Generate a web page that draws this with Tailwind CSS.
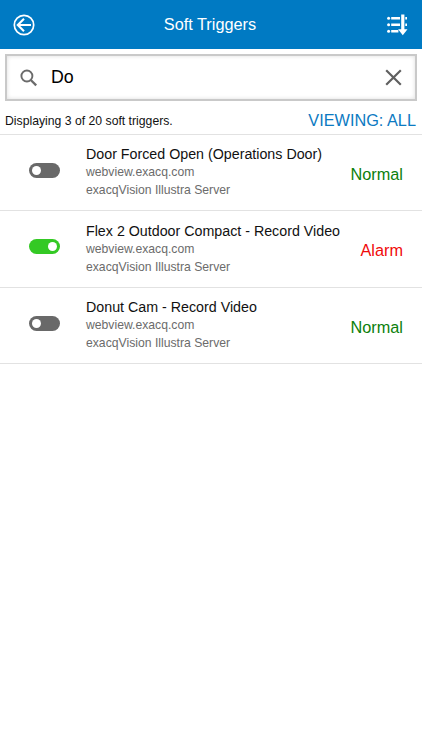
<!DOCTYPE html>
<html lang="en">
<head>
<meta charset="utf-8">
<title>Soft Triggers</title>
<script src="https://cdn.jsdelivr.net/npm/@tailwindcss/browser@4"></script>
</head>
<body class="h-[750px] overflow-hidden bg-white font-['Liberation_Sans',Arial,sans-serif] text-[#111]">
<header class="flex h-[49px] items-center justify-between bg-[#007ac3] pl-[13px] pr-[14px] text-white">
  <svg class="size-[22px]" viewBox="0 0 22 22" fill="none" stroke="currentColor" stroke-width="1.7"><circle cx="11" cy="11" r="9.7"/><path d="M18 11H4.8M11 4.8 4.8 11l6.2 6.2" stroke-width="2.1"/></svg>
  <h1 class="mr-[2px] pb-[2px] text-[16.3px] leading-5">Soft Triggers</h1>
  <svg class="h-[22px] w-[21px]" viewBox="0 0 21 22" fill="currentColor"><circle cx="1.6" cy="4.2" r="1.5"/><circle cx="1.6" cy="10.8" r="1.5"/><circle cx="1.6" cy="17.2" r="1.5"/><path d="M4.2 3H13v2.4H4.2zM18.3 3H20v2.4h-1.7zM4.2 9.6H13V12H4.2zM18.3 9.6H20V12h-1.7zM4.2 16h7.2v2.4H4.2z"/><path d="M14.2 0.5h3.2v14.8h3.1L15.8 21.3l-4.7-6h3.1z"/></svg>
</header>
<main>
  <div class="mx-[5px] mt-[5px] flex h-[47px] items-center border-2 border-[#c9c9c9] pr-[13px] pl-[13px] shadow-[inset_0_0_4px_#ddd]">
    <svg class="h-[18px] w-[17px]" viewBox="0 0 17 18" fill="none" stroke="#6b6b6b" stroke-width="1.9"><circle cx="6.9" cy="7" r="5.5"/><path d="m10.8 11 5.4 5.4" stroke-width="2.3"/></svg>
    <span class="ml-[14px] flex-1 pb-[2px] text-[17.8px] leading-5 text-black">Do</span>
    <svg class="size-[17px]" viewBox="0 0 17 17" fill="none" stroke="#606060" stroke-width="2.2"><path d="m1.2 1.2 14.6 14.6M15.8 1.2 1.2 15.8"/></svg>
  </div>
  <div class="flex h-[34px] items-start justify-between border-b border-[#e2e2e2] pr-[6px] pl-[5px]">
    <p class="pt-[13px] text-[12.22px] leading-[15px]">Displaying 3 of 20 soft triggers.</p>
    <p class="pt-[9px] text-[16.3px] leading-5 text-[#0c7ac2]">VIEWING: ALL</p>
  </div>
  <ul>
    <li class="flex h-[76px] border-b border-[#e2e2e2] pt-[10px] pr-[19px] pl-[29px]">
      <div class="mt-[18px] flex h-[15px] w-[31px] items-center rounded-full bg-[#696969] px-[3px]"><i class="size-[9px] rounded-full bg-white"></i></div>
      <div class="ml-[26px] flex-1 whitespace-nowrap text-[12.2px] leading-[18px] text-[#6b6b6b]"><h2 class="text-[14.25px] text-[#111]">Door Forced Open (Operations Door)</h2><p>webview.exacq.com</p><p>exacqVision Illustra Server</p></div>
      <p class="mt-[19px] text-[16.3px] leading-5 text-[#0b800b]">Normal</p>
    </li>
    <li class="flex h-[77px] border-b border-[#e2e2e2] pt-[11px] pr-[19px] pl-[29px]">
      <div class="mt-[17px] flex h-[15px] w-[31px] items-center justify-end rounded-full bg-[#34c924] px-[3px]"><i class="size-[9px] rounded-full bg-white"></i></div>
      <div class="ml-[26px] flex-1 whitespace-nowrap text-[12.2px] leading-[18px] text-[#6b6b6b]"><h2 class="text-[14.25px] text-[#111]">Flex 2 Outdoor Compact - Record Video</h2><p>webview.exacq.com</p><p>exacqVision Illustra Server</p></div>
      <p class="mt-[18px] text-[16.3px] leading-5 text-[#f00a0a]">Alarm</p>
    </li>
    <li class="flex h-[76px] border-b border-[#e2e2e2] pt-[10px] pr-[19px] pl-[29px]">
      <div class="mt-[18px] flex h-[15px] w-[31px] items-center rounded-full bg-[#696969] px-[3px]"><i class="size-[9px] rounded-full bg-white"></i></div>
      <div class="ml-[26px] flex-1 whitespace-nowrap text-[12.2px] leading-[18px] text-[#6b6b6b]"><h2 class="text-[14.25px] text-[#111]">Donut Cam - Record Video</h2><p>webview.exacq.com</p><p>exacqVision Illustra Server</p></div>
      <p class="mt-[19px] text-[16.3px] leading-5 text-[#0b800b]">Normal</p>
    </li>
  </ul>
</main>
</body>
</html>
